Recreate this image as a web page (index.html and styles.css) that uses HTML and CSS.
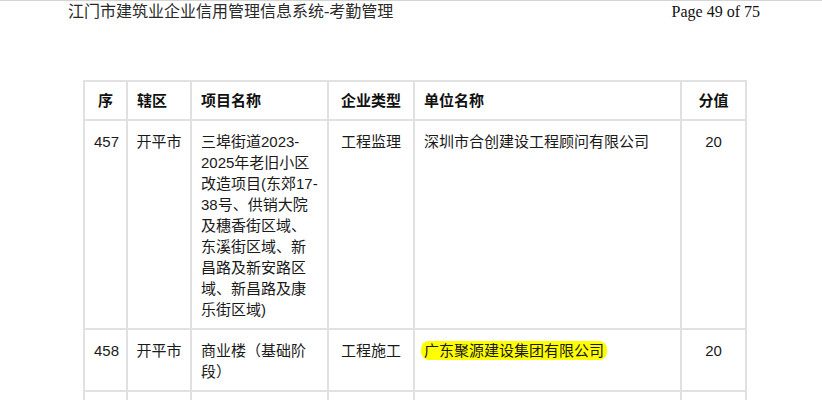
FILE: index.html
```html
<!DOCTYPE html>
<html lang="zh-CN">
<head>
	<meta charset="UTF-8">
	<meta name="viewport" content="width=device-width, initial-scale=1.0">
	<title>考勤管理</title>
	<link rel="stylesheet" href="styles.css">
</head>
<body>
	<div class="page-head">
		<span class="doc-title">江门市建筑业企业信用管理信息系统-考勤管理</span>
		<span class="page-no">Page 49 of 75</span>
	</div>

	<table class="score-table">
		<colgroup>
			<col class="c-no">
			<col class="c-area">
			<col class="c-project">
			<col class="c-type">
			<col class="c-unit">
			<col class="c-score">
		</colgroup>
		<thead>
			<tr>
				<th class="mid">序</th>
				<th>辖区</th>
				<th>项目名称</th>
				<th class="mid">企业类型</th>
				<th>单位名称</th>
				<th class="mid">分值</th>
			</tr>
		</thead>
		<tbody>
			<tr>
				<td class="mid">457</td>
				<td class="area">开平市</td>
				<td>三埠街道2023-<wbr>2025年老旧小区改造项目(东郊17-<wbr>38号、供销大院及穗香街区域、东溪街区域、新昌路及新安路区域、新昌路及康乐街区域)</td>
				<td class="mid">工程监理</td>
				<td>深圳市合创建设工程顾问有限公司</td>
				<td class="mid">20</td>
			</tr>
			<tr>
				<td class="mid">458</td>
				<td class="area">开平市</td>
				<td>商业楼（基础阶段）</td>
				<td class="mid">工程施工</td>
				<td><span class="mark">广东聚源建设集团有限公司</span></td>
				<td class="mid">20</td>
			</tr>
			<tr class="cut">
				<td></td><td></td><td></td><td></td><td></td><td></td>
			</tr>
		</tbody>
	</table>
</body>
</html>
```

FILE: styles.css
```css
html{
	background: #fff;
}
body{
	margin: 0;
	border-top: 1px solid #d4d4d4;
	color: #222;
}
.page-head{
	display: flex;
	justify-content: space-between;
	width: 692px;
	margin-left: 68px;
	padding-top: 1px;
	font-family: "Liberation Serif", "Noto Sans CJK SC", serif;
	font-size: 16px;
	line-height: 19px;
}
.doc-title{
	color: #2a2a2a;
}
.page-no{
	color: #111;
}

.score-table{
	margin: 59px 0 0 83px;
	width: 662px;
	table-layout: fixed;
	border-collapse: collapse;
	font-family: "Liberation Sans", "Noto Sans CJK SC", sans-serif;
	font-size: 15px;
	line-height: 21px;
}
.c-no{width: 43px;}
.c-area{width: 64px;}
.c-project{width: 137px;}
.c-type{width: 86px;}
.c-unit{width: 267px;}
.c-score{width: 65px;}

.score-table th,
.score-table td{
	border: 2px solid #e1e1e1;
	text-align: left;
	vertical-align: top;
}
.score-table th{
	padding: 8px 9px;
	font-weight: bold;
	color: #111;
}
.score-table td{
	padding: 10px 9px 8px;
	color: #1a1a1a;
}
.score-table .mid{
	text-align: center;
}
.score-table .area{
	padding-left: 2px;
	padding-right: 2px;
	text-align: center;
}
.cut td{
	height: 40px;
}
.mark{
	background: #ffff00;
	padding: 1px 3px;
	margin: 0 -3px;
	border-radius: 8px;
}
```
